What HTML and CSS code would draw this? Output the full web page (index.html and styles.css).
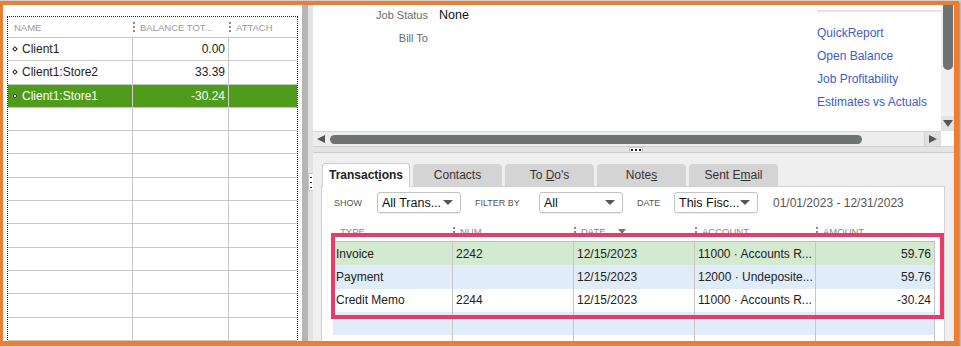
FILE: index.html
```html
<!DOCTYPE html>
<html lang="en">
<head>
  <meta charset="UTF-8" />
  <title>Customer Center</title>
  <link rel="stylesheet" href="styles.css">
</head>
<body>

  <div class="frame">

    <div class="left">
      <div class="grid">
        <div class="grow ghead">
          <div class="gc">NAME</div>
          <div class="gc"><span class="sep"></span>BALANCE TOT...</div>
          <div class="gc"><span class="sep"></span>ATTACH</div>
        </div>
        <div class="grow">
          <div class="gc"><span class="dia"></span>Client1</div>
          <div class="gc num">0.00</div>
          <div class="gc"></div>
        </div>
        <div class="grow">
          <div class="gc"><span class="dia"></span>Client1:Store2</div>
          <div class="gc num">33.39</div>
          <div class="gc"></div>
        </div>
        <div class="grow picked">
          <div class="gc"><span class="dia"></span>Client1:Store1</div>
          <div class="gc num">-30.24</div>
          <div class="gc"></div>
        </div>
        <div class="grow"><div class="gc"></div><div class="gc"></div><div class="gc"></div></div>
        <div class="grow"><div class="gc"></div><div class="gc"></div><div class="gc"></div></div>
        <div class="grow"><div class="gc"></div><div class="gc"></div><div class="gc"></div></div>
        <div class="grow"><div class="gc"></div><div class="gc"></div><div class="gc"></div></div>
        <div class="grow"><div class="gc"></div><div class="gc"></div><div class="gc"></div></div>
        <div class="grow"><div class="gc"></div><div class="gc"></div><div class="gc"></div></div>
        <div class="grow"><div class="gc"></div><div class="gc"></div><div class="gc"></div></div>
        <div class="grow"><div class="gc"></div><div class="gc"></div><div class="gc"></div></div>
        <div class="grow"><div class="gc"></div><div class="gc"></div><div class="gc"></div></div>
        <div class="grow"><div class="gc"></div><div class="gc"></div><div class="gc"></div></div>
        <div class="grow"><div class="gc"></div><div class="gc"></div><div class="gc"></div></div>
      </div>
    </div>

    <div class="vsplit"><span class="vgrip"></span></div>

    <div class="right">
      <div class="info">
        <div class="info-body">
          <div class="fields">
            <span class="flab">Job Status</span><span class="fval">None</span>
            <span class="flab">Bill To</span><span class="fval"></span>
          </div>
          <div class="links">
            <a href="#">QuickReport</a>
            <a href="#">Open Balance</a>
            <a href="#">Job Profitability</a>
            <a href="#">Estimates vs Actuals</a>
          </div>
        </div>
        <div class="vscroll">
          <div class="vthumb"></div>
          <div class="vdown"><span class="tri-down"></span></div>
        </div>
      </div>

      <div class="hbar">
        <div class="hscroll">
          <div class="hleft"><span class="tri-left"></span></div>
          <div class="hthumb"></div>
          <div class="hright"><span class="tri-right"></span></div>
        </div>
        <div class="corner"></div>
      </div>

      <div class="hsplit"><span class="hgrip"></span></div>

      <div class="lower">
        <div class="tabs">
          <div class="tab active">Transact<u>i</u>ons</div>
          <div class="tab">Contacts</div>
          <div class="tab">To <u>D</u>o's</div>
          <div class="tab">Note<u>s</u></div>
          <div class="tab">Sent E<u>m</u>ail</div>
        </div>
        <div class="panel">
          <div class="filters">
            <span class="flabel w-show">SHOW</span>
            <div class="select">All Trans...<span class="tri-down"></span></div>
            <span class="flabel w-filter">FILTER BY</span>
            <div class="select">All<span class="tri-down"></span></div>
            <span class="flabel w-date">DATE</span>
            <div class="select">This Fisc...<span class="tri-down"></span></div>
            <span class="range">01/01/2023 - 12/31/2023</span>
          </div>

          <div class="tx">
            <div class="trow thead">
              <div class="tc">TYPE</div>
              <div class="tc"><span class="sep"></span>NUM</div>
              <div class="tc"><span class="sep"></span>DATE<span class="sort"></span></div>
              <div class="tc"><span class="sep"></span>ACCOUNT</div>
              <div class="tc"><span class="sep"></span>AMOUNT</div>
            </div>
            <div class="trow green">
              <div class="tc">Invoice</div>
              <div class="tc">2242</div>
              <div class="tc">12/15/2023</div>
              <div class="tc">11000 · Accounts R...</div>
              <div class="tc num">59.76</div>
            </div>
            <div class="trow blue">
              <div class="tc">Payment</div>
              <div class="tc"></div>
              <div class="tc">12/15/2023</div>
              <div class="tc">12000 · Undeposite...</div>
              <div class="tc num">59.76</div>
            </div>
            <div class="trow">
              <div class="tc">Credit Memo</div>
              <div class="tc">2244</div>
              <div class="tc">12/15/2023</div>
              <div class="tc">11000 · Accounts R...</div>
              <div class="tc num">-30.24</div>
            </div>
            <div class="trow blue"><div class="tc"></div><div class="tc"></div><div class="tc"></div><div class="tc"></div><div class="tc"></div></div>
            <div class="trow"><div class="tc"></div><div class="tc"></div><div class="tc"></div><div class="tc"></div><div class="tc"></div></div>
          </div>
        </div>
      </div>
    </div>

    <div class="highlight"></div>
  </div>

</body>
</html>
```

FILE: styles.css
```css
* {
  box-sizing: border-box;
}
body {
  margin: 0;
  background: #d4d4d4;
  font-family: "Liberation Sans", Arial, sans-serif;
  color: #1e1e1e;
  font-size: 12px;
}
.frame {
  position: relative;
  display: flex;
  width: 959px;
  height: 345px;
  margin-top: 1px;
  border: solid #ed7d31;
  border-width: 4px 5px 5px 3px;
  background: #fff;
  box-shadow: 1px 1px 2px rgba(0, 0, 0, 0.35);
  overflow: hidden;
}

/* left customer list */
.left {
  width: 299px;
  flex-shrink: 0;
  padding: 11px 4px 0 4px;
  background: #fff;
  overflow: hidden;
}
.grid {
  border: 1px dotted #222;
  border-bottom: none;
  height: 400px;
}
.grow {
  display: grid;
  grid-template-columns: 125px 96px 1fr;
  height: 23.3px;
  border-bottom: 1px solid #c8c8c8;
}
.gc {
  display: flex;
  align-items: center;
  padding: 0 3px 0 4px;
  border-right: 1px solid #c8c8c8;
  white-space: nowrap;
  overflow: hidden;
}
.gc:last-child {
  border-right: none;
}
.gc.num {
  justify-content: flex-end;
}
.ghead {
  height: 21px;
}
.ghead .gc {
  border-right: none;
  padding-left: 0;
  font-size: 9.5px;
  color: #9a9a9a;
}
.ghead .gc:first-child {
  padding-left: 6px;
}
.sep {
  width: 2px;
  height: 10px;
  border-left: 2px dotted #8a8a8a;
  margin-right: 5px;
}
.dia {
  width: 4px;
  height: 4px;
  border: 1px solid #222;
  background: #fff;
  transform: rotate(45deg);
  margin: 0 5px 0 1px;
}
.picked {
  background: #4f9b1b;
  color: #fff;
}
.picked .gc {
  border-right-color: #d0d0d0;
}

/* splitters */
.vsplit {
  width: 11px;
  flex-shrink: 0;
  background: linear-gradient(to right, #b5b5b5 0 6px, #e3e3e3 6px);
  display: flex;
  align-items: flex-start;
  justify-content: flex-end;
}
.vgrip {
  width: 5px;
  height: 18px;
  margin-top: 168px;
  background: #fff;
  border: 1px solid #c8c8c8;
  border-right: none;
  background-image: radial-gradient(circle, #222 0.8px, transparent 1px);
  background-size: 4px 5px;
  background-position: 0 1px;
}

/* right side */
.right {
  width: 641px;
  flex-shrink: 0;
  display: flex;
  flex-direction: column;
  min-height: 0;
}
.info {
  height: 126px;
  flex-shrink: 0;
  display: flex;
}
.info-body {
  width: 628px;
  display: flex;
  background: #fff;
}
.fields {
  display: grid;
  grid-template-columns: 115px auto;
  column-gap: 11px;
  row-gap: 3px;
  align-content: start;
  line-height: 20px;
}
.flab {
  text-align: right;
  font-size: 11px;
  color: #6a6a6a;
}
.fval {
  font-size: 12.5px;
  color: #111;
}
.links {
  margin-left: auto;
  width: 124px;
  margin-top: 5px;
  border-top: 2px solid #e4e4e4;
  padding-top: 10px;
  display: flex;
  flex-direction: column;
  align-self: flex-start;
}
.links a {
  line-height: 23px;
  color: #3d5ccf;
  text-decoration: none;
}
.vscroll {
  width: 13px;
  background: #efefef;
  display: flex;
  flex-direction: column;
  justify-content: space-between;
}
.vthumb {
  height: 65px;
  margin: 0 1px 0 2px;
  background: #6f7371;
  border-radius: 0 0 5px 5px;
}
.vdown {
  height: 15px;
  background: #e2e2e2;
  display: flex;
  align-items: center;
  justify-content: center;
}
.hbar {
  height: 15px;
  flex-shrink: 0;
  display: flex;
}
.hscroll {
  width: 628px;
  display: flex;
  background: #ededed;
  border-top: 1px solid #d6d6d6;
}
.hleft {
  width: 15px;
  display: flex;
  align-items: center;
  justify-content: center;
}
.hthumb {
  width: 532px;
  height: 9px;
  margin: 3px 0 0 2px;
  background: #6f7371;
  border-radius: 5px;
}
.hright {
  margin-left: auto;
  width: 17px;
  background: #e0e0e0;
  border-left: 1px solid #d2d2d2;
  display: flex;
  align-items: center;
  justify-content: center;
}
.corner {
  flex: 1;
  background: #fff;
}
.tri-left {
  border-top: 4px solid transparent;
  border-bottom: 4px solid transparent;
  border-right: 8px solid #555;
}
.tri-right {
  border-top: 4px solid transparent;
  border-bottom: 4px solid transparent;
  border-left: 8px solid #555;
}
.tri-down {
  border-left: 5px solid transparent;
  border-right: 5px solid transparent;
  border-top: 7px solid #555;
}
.hsplit {
  height: 7px;
  flex-shrink: 0;
  background: #e4e4e4;
  border-top: 1px solid #d2d2d2;
  border-bottom: 1px solid #cdcdcd;
  display: flex;
  justify-content: center;
}
.hgrip {
  width: 14px;
  height: 5px;
  margin-left: 4px;
  background: #fff;
  border: 1px solid #c8c8c8;
  border-bottom: none;
  background-image: radial-gradient(circle, #222 0.8px, transparent 1px);
  background-size: 4px 4px;
  background-position: 0 0;
}

/* transactions area */
.lower {
  flex: 1;
  min-height: 0;
  overflow: hidden;
  background: #efefef;
  padding: 10px 9px 0 8px;
  display: flex;
  flex-direction: column;
}
.tabs {
  display: flex;
  flex-shrink: 0;
  gap: 3px;
  align-items: flex-end;
  height: 23px;
  margin-left: 1px;
}
.tab {
  width: 89px;
  height: 22px;
  line-height: 22px;
  text-align: center;
  background: #d4d4d4;
  border-radius: 4px 4px 0 0;
  color: #333;
}
.tab.active {
  width: 88px;
  height: 24px;
  line-height: 23px;
  margin-bottom: -1px;
  background: #fff;
  border: 1px solid #cdcdcd;
  border-bottom: none;
  font-weight: bold;
  color: #222;
  position: relative;
  z-index: 1;
}
.panel {
  flex: 1;
  flex-shrink: 0;
  background: #fff;
  border: 1px solid #d2d2d2;
  border-bottom: none;
  padding: 5px 0 0 12px;
}
.filters {
  display: flex;
  align-items: center;
  height: 21px;
}
.flabel {
  font-size: 9px;
  color: #555;
}
.w-show { width: 43px; }
.w-filter { width: 64px; }
.w-date { width: 37px; }
.select {
  width: 84px;
  height: 21px;
  margin-right: 14px;
  padding: 0 7px 0 4px;
  display: flex;
  align-items: center;
  justify-content: space-between;
  border: 1px solid #c4c4c4;
  border-radius: 3px;
  box-shadow: 0 1px 1px rgba(0, 0, 0, 0.08);
  font-size: 12.5px;
  color: #111;
}
.select .tri-down {
  border-left-width: 5px;
  border-right-width: 5px;
  border-top-width: 5px;
}
.range {
  margin-left: 1px;
  color: #555;
}
.tx {
  margin: 9px 0 0 -1px;
  width: 602px;
}
.trow {
  display: grid;
  grid-template-columns: 120px 121px 121px 121px 119px;
  height: 23.3px;
}
.tc {
  display: flex;
  align-items: center;
  padding: 0 3px;
  border-right: 1px solid #c6c6c6;
  white-space: nowrap;
  overflow: hidden;
  color: #222;
}
.tc.num {
  justify-content: flex-end;
}
.thead {
  height: 20px;
  border-bottom: 1px solid #bdbdbd;
}
.thead .tc {
  border-right: none;
  padding-left: 0;
  font-size: 9.5px;
  color: #8a8a8a;
}
.thead .tc:first-child {
  padding-left: 7px;
}
.sort {
  margin-left: 12px;
  border-left: 4px solid transparent;
  border-right: 4px solid transparent;
  border-top: 5px solid #777;
}
.green {
  background: #d3e9d0;
}
.blue {
  background: #e1ecfa;
}

/* annotation box drawn over the screenshot */
.highlight {
  position: absolute;
  left: 328px;
  top: 228px;
  width: 613px;
  height: 86px;
  border: 4px solid #e93a68;
}
```
